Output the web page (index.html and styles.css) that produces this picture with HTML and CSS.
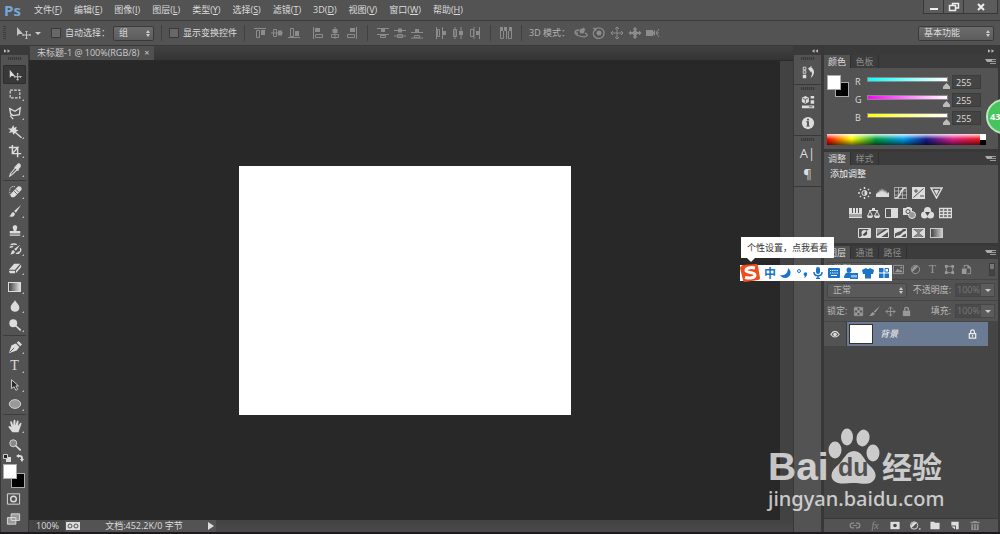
FILE: index.html
```html
<!DOCTYPE html>
<html lang="zh-CN">
<head>
    <meta charset="UTF-8">
    <meta name="viewport" content="width=device-width, initial-scale=1.0">
    <title>Photoshop</title>
    <link rel="stylesheet" href="styles.css">
</head>
<body>
<div class="app">
    <header class="menubar">
        <div class="logo">Ps</div>
        <nav class="menus">
            <button>文件(<u>F</u>)</button>
            <button>编辑(<u>E</u>)</button>
            <button>图像(<u>I</u>)</button>
            <button>图层(<u>L</u>)</button>
            <button>类型(<u>Y</u>)</button>
            <button>选择(<u>S</u>)</button>
            <button>滤镜(<u>T</u>)</button>
            <button>3D(<u>D</u>)</button>
            <button>视图(<u>V</u>)</button>
            <button>窗口(<u>W</u>)</button>
            <button>帮助(<u>H</u>)</button>
        </nav>
        <div class="window-buttons">
            <button aria-label="最小化"><svg viewBox="0 0 12 10"><path d="M2 6h8v2H2z"/></svg></button>
            <button aria-label="还原"><svg viewBox="0 0 12 10" class="line"><path d="M4.500 3V1.500h6v4.500H8M1.500 3.500h6v5h-6z" stroke-width="1.500"/></svg></button>
            <button class="close" aria-label="关闭"><svg viewBox="0 0 12 10" class="line"><path d="M3 2l6 6M9 2L3 8" stroke-width="2"/></svg></button>
        </div>
    </header>

    <div class="options">
        <span class="grip-v"></span>
        <button class="current-tool" aria-label="移动工具">
            <svg class="wide" viewBox="0 0 15 12"><path d="M1 0v9l2-2h4z"/><path class="o" d="M10.500 4v8M6.500 8h8M9.500 5l1-1 1 1M9.500 11l1 1 1-1M7.500 7l-1 1 1 1M13.500 7l1 1-1 1"/></svg>
            <span class="caret"></span>
        </button>
        <label class="check"><input type="checkbox">自动选择：</label>
        <span class="select group-select"><select aria-label="自动选择对象"><option>组</option><option>图层</option></select></span>
        <span class="divider"></span>
        <label class="check"><input type="checkbox">显示变换控件</label>
        <span class="divider"></span>
        <div class="align">
            <button aria-label="顶对齐"><svg viewBox="0 0 12 12"><path d="M0 1h12v1H0zM7 3h4v5H7z"/><path class="o" d="M2.500 3.500h3v7h-3z"/></svg></button>
            <button aria-label="垂直居中对齐"><svg viewBox="0 0 12 12"><path d="M0 5.500h12v1H0zM7 3.500h4v5H7z"/><path class="o" d="M2.500 2.500h3v7h-3z"/></svg></button>
            <button aria-label="底对齐"><svg viewBox="0 0 12 12"><path d="M0 10h12v1H0zM7 4h4v5H7z"/><path class="o" d="M2.500 1.500h3v8h-3z"/></svg></button>
        </div>
        <div class="align">
            <button aria-label="左对齐"><svg viewBox="0 0 12 12"><path d="M1 0h1v12H1zM3 1h5v4H3z"/><path class="o" d="M3.500 7.500h7v3h-7z"/></svg></button>
            <button aria-label="水平居中对齐"><svg viewBox="0 0 12 12"><path d="M5.500 0h1v12h-1zM3.500 2h5v4h-5z"/><path class="o" d="M2.500 7.500h7v3h-7z"/></svg></button>
            <button aria-label="右对齐"><svg viewBox="0 0 12 12"><path d="M10 0h1v12h-1zM4 1h5v4H4z"/><path class="o" d="M1.500 7.500h7v3h-7z"/></svg></button>
        </div>
        <span class="divider"></span>
        <div class="align">
            <button aria-label="按顶分布"><svg viewBox="0 0 12 12"><path d="M0 1h12v1H0zM0 7h12v1H0zM4 2h4v3H4z"/><path class="o" d="M3.500 8.500h5v2h-5z"/></svg></button>
            <button aria-label="垂直居中分布"><svg viewBox="0 0 12 12"><path d="M0 3h12v1H0zM0 8.500h12v1H0zM4 1.500h4v4H4z"/><path class="o" d="M3.500 7.500h5v3h-5z"/></svg></button>
            <button aria-label="按底分布"><svg viewBox="0 0 12 12"><path d="M0 5h12v1H0zM0 10.500h12v1H0zM4 2h4v3H4z"/><path class="o" d="M3.500 8.500h5v2h-5z"/></svg></button>
        </div>
        <div class="align">
            <button aria-label="按左分布"><svg viewBox="0 0 12 12"><path d="M1 0h1v12H1zM7 0h1v12H7zM8 4h3v4H8z"/><path class="o" d="M2.500 2.500h2v7h-2z"/></svg></button>
            <button aria-label="水平居中分布"><svg viewBox="0 0 12 12"><path d="M2.500 0h1v12h-1zM8.500 0h1v12h-1zM7 4h4v4H7z"/><path class="o" d="M1.500 2.500h3v7h-3z"/></svg></button>
            <button aria-label="按右分布"><svg viewBox="0 0 12 12"><path d="M4.500 0h1v12h-1zM10 0h1v12h-1zM7 4h3v4H7z"/><path class="o" d="M1.500 2.500h3v7h-3z"/></svg></button>
        </div>
        <span class="divider"></span>
        <div class="align">
            <button aria-label="自动对齐图层"><svg viewBox="0 0 12 12"><path d="M0 0h3v4H0zM4 0h3v4H4zM9 0h3v4H9z"/><path class="o" d="M.5 4v7.500h3V4M6.500 0v12M8.500 4v7.500h3V4"/></svg></button>
        </div>
        <span class="divider"></span>
        <span class="mode-label">3D 模式：</span>
        <div class="align modes">
            <button aria-label="旋转"><svg viewBox="0 0 14 12"><circle cx="8" cy="4" r="2.500"/><path class="o" d="M5 3C0 3 0 7 4 8.500c4 1.500 8 2 9 0 .5-1-1-2-2-2.500M4 6l-3 .5M9 1l2 2" stroke-width="1.300"/></svg></button>
            <button aria-label="滚动"><svg viewBox="0 0 14 12"><circle cx="7" cy="6" r="2.500"/><path class="o" d="M3 2.500C6-.5 12 1 12 6s-6 7-9 4S1 5 3 2.500M1 1l3 1-1 2" stroke-width="1.300"/></svg></button>
            <button aria-label="拖动"><svg viewBox="0 0 14 12"><path class="o" d="M7 0v12M1 6h12M5 2l2-2 2 2M5 10l2 2 2-2M3 4L1 6l2 2M11 4l2 2-2 2"/></svg></button>
            <button aria-label="滑动"><svg viewBox="0 0 14 12"><circle cx="7" cy="6" r="2.500"/><path d="M7 0l2.500 2.500H8V5h3V3.500L13.500 6 11 8.500V7H8v2.500h1.500L7 12 4.500 9.500H6V7H3v1.500L.5 6 3 3.500V5h3V2.500H4.500z"/></svg></button>
            <button aria-label="缩放"><svg viewBox="0 0 14 12"><path d="M0 3h7v6H0zM7 5l2-2v6L7 7z"/><path class="o" d="M13 2l-3 4 3 4M10 6h3"/></svg></button>
        </div>
        <span class="select workspace"><select aria-label="工作区"><option>基本功能</option></select></span>
    </div>

    <div class="workspace-area">
        <aside class="toolbox">
            <div class="strip"><svg viewBox="0 0 8 6"><path d="M0 1l3 2-3 2zM4 1l3 2-3 2z"/></svg></div>
            <div class="tools">
                <span class="grip"></span>
                <button class="active" aria-label="移动"><svg viewBox="0 0 16 16"><path d="M2 2v9l2-2h4z"/><path class="o" d="M11 6v8M7 10h8M10 7l1-1 1 1M10 13l1 1 1-1M8 9l-1 1 1 1M14 9l1 1-1 1"/></svg></button>
                <button aria-label="选框"><svg viewBox="0 0 16 16"><path class="o" d="M2.500 3.500h11v9h-11z" stroke-dasharray="3 1.500" stroke-width="1.300"/></svg></button>
                <button aria-label="套索"><svg viewBox="0 0 16 16"><path class="o" d="M2 3l6 3 6-4-1 8-7 1-3-2zM6 11c-2-2-4 0-2 2l2 2" stroke-width="1.500"/></svg></button>
                <button aria-label="魔棒"><svg viewBox="0 0 16 16"><path d="M6 0l1 3 3-1-1 3 3 1-3 2 7 6-1 1-7-6-2 2-1-3-4 1 2-3-3-2h4z"/></svg></button>
                <button aria-label="裁剪"><svg viewBox="0 0 16 16"><path class="o" d="M5 1v10h10M1 4h10v11M5 11l7-8" stroke-width="1.700"/></svg></button>
                <button aria-label="吸管"><svg viewBox="0 0 16 16"><path d="M10 2c3-4 6 0 4 3l-2 2 1 1-2 1-4-4 1-1z"/><path class="o" d="M8 6l-5 6-1 3 3-2 5-5" stroke-width="1.300"/></svg></button>
                <hr>
                <button aria-label="修复画笔"><svg viewBox="0 0 16 16"><path d="M4 9l7-7c3-2 6 2 4 4l-7 7c-3 3-7-1-4-4z"/><path class="o" d="M8 2c-4-1-6 1-6 5s1 6 3 7" stroke-dasharray="1.500 1"/><path class="cut" d="M7 7l3 3M9 5l3 3"/></svg></button>
                <button aria-label="画笔"><svg viewBox="0 0 16 16"><path d="M15 1l-6 9-2-2zM6 9l2 2c-1 4-4 4-7 3 3-1 2-4 5-5z"/></svg></button>
                <button aria-label="仿制图章"><svg viewBox="0 0 16 16"><path d="M6 7c-3-6 7-6 4 0l-.5 2H14v3H2V9h4.500zM2 13h12v1.500H2z"/></svg></button>
                <button aria-label="历史记录画笔"><svg viewBox="0 0 16 16"><path d="M14 3l-5 7-2-2zM6 9l2 2c-1 3-4 3-6 3 3-1 1-4 4-5z"/><path class="o" d="M2 6l4-1M3 3c3-1 5-1 7 0M11 12c4 0 4-3 3-5M9 13h4" stroke-width="1.500"/></svg></button>
                <button aria-label="橡皮擦"><svg viewBox="0 0 16 16"><path d="M7 3h7l-6 7H1zM1 11h7v3H2zM9 11l6-7v3l-6 7z"/></svg></button>
                <button aria-label="渐变"><span class="gradient-icon"></span></button>
                <button aria-label="模糊"><svg viewBox="0 0 16 16"><path d="M8 1c1 3 5 5 5 9 0 6-10 6-10 0 0-4 4-6 5-9z"/></svg></button>
                <button aria-label="减淡"><svg viewBox="0 0 16 16"><circle cx="6" cy="6" r="4.500"/><path d="M8 9l1-1 6 5-1 2z"/></svg></button>
                <hr>
                <button aria-label="钢笔"><svg viewBox="0 0 16 16"><path d="M1 15l3-9 5-2 4 4-3 4z"/><path d="M10 3l2-2 4 4-2 2z"/><path class="cut" d="M2 14l5-5"/></svg></button>
                <button aria-label="文字"><span class="type-icon">T</span></button>
                <button aria-label="路径选择"><svg viewBox="0 0 16 16"><path class="arrow" d="M4 2v10l3-2 2 4 2-1-2-4h3z"/></svg></button>
                <button aria-label="椭圆"><svg viewBox="0 0 16 16"><ellipse class="shape" cx="8" cy="8" rx="6.500" ry="5"/></svg></button>
                <hr>
                <button aria-label="抓手"><svg viewBox="0 0 16 16"><path d="M5 15L1 10C-.5 7.500 2 7.500 3 8.500l1 1L2.500 4c0-2 2-1.500 2.300 0L6 7.500 6.300 2c.2-1.500 2-1.500 2.200 0v5.500L10 2.500c.5-1.500 2.300-1 2 .5L11.500 8l2-3c1-1.200 2.400-.5 1.700 1L12 15z"/></svg></button>
                <button class="no-more" aria-label="缩放工具"><svg viewBox="0 0 16 16"><circle class="lens" cx="6" cy="6" r="4"/><path d="M8 9l1-1 6 5-1 2z"/></svg></button>
            </div>
            <div class="swatch-tools">
                <button aria-label="默认颜色"><svg viewBox="0 0 8 8"><path d="M3 3h5v5H3z"/><path class="mini" d="M.5.5h4v4h-4z"/></svg></button>
                <button aria-label="切换颜色"><svg viewBox="0 0 8 8"><path d="M0 2l3-2v1c3 0 4 1 4 4h1L6 8 4 5h1c0-2 0-2-2-2v1z"/></svg></button>
            </div>
            <div class="swatches"><span class="bg"></span><span class="fg"></span></div>
            <div class="screen-tools">
                <button aria-label="快速蒙版"><svg viewBox="0 0 16 12"><path class="o" d="M1.500.500h13v11h-13z"/><circle class="o" cx="8" cy="6" r="3" stroke-width="1.500"/></svg></button>
                <button aria-label="屏幕模式"><svg viewBox="0 0 16 12"><path class="shape" d="M1.500 4.500h9v7h-9zM5.500.500h9v7h-9z"/></svg></button>
            </div>
        </aside>

        <main class="document">
            <div class="doc-tabs">
                <div class="doc-tab">未标题-1 @ 100%(RGB/8) <button aria-label="关闭文档">×</button></div>
            </div>
            <div class="doc-view">
                <div class="canvas-area"><div class="canvas"></div></div>
                <div class="scrollbar"></div>
            </div>
            <footer class="status">
                <span class="zoom">100%</span>
                <div class="status-info">
                    <svg viewBox="0 0 14 8"><path d="M0 0h14v8H0z"/><circle class="cut" cx="4" cy="4" r="2"/><circle class="cut" cx="10" cy="4" r="2"/></svg>
                    <span>文档:452.2K/0 字节</span>
                    <button aria-label="状态选项"><svg viewBox="0 0 6 8"><path d="M0 0l6 4-6 4z"/></svg></button>
                </div>
            </footer>
        </main>

        <aside class="dock">
            <div class="strip"><svg viewBox="0 0 8 6"><path d="M4 1L1 3l3 2zM8 1L5 3l3 2z"/></svg></div>
            <div class="dock-group">
                <span class="grip"></span>
                <button aria-label="历史记录"><svg viewBox="0 0 16 16"><path class="o" d="M2.500 2.500h3v3h-3zM2.500 6.500h3v3h-3z"/><path d="M2 11h4v4H2zM8 4l4-3v2c4 2 4 8-1 12 2-5 2-7 1-8v2z"/></svg></button>
            </div>
            <div class="dock-group">
                <span class="grip"></span>
                <button aria-label="属性"><svg viewBox="0 0 16 16"><path d="M1 3l4-2 4 2v5L5 10 1 8zM11 1h4v3h-4zM11 6h4v4h-4zM1 12h14v3H1z"/><path class="cut" d="M2 4l3 1 3-1M5 5v4M9 13.500h4"/></svg></button>
                <button aria-label="信息"><svg viewBox="0 0 16 16"><circle cx="8" cy="8" r="7"/><path class="ink" d="M7 3h2v2H7zM6 6h3v5h1v1H6v-1h1V7H6z"/></svg></button>
            </div>
            <div class="dock-group">
                <span class="grip"></span>
                <button class="glyph" aria-label="字符">A|</button>
                <button class="glyph" aria-label="段落">¶</button>
            </div>
            <div class="dock-rest"></div>
        </aside>

        <aside class="panels">
            <div class="strip right"><svg viewBox="0 0 8 6"><path d="M0 1l3 2-3 2zM4 1l3 2-3 2z"/></svg></div>

            <section class="panel">
                <div class="tabs"><button class="on">颜色</button><button>色板</button><span class="panel-menu"></span></div>
                <div class="color-body">
                    <div class="swatches small"><span class="bg"></span><span class="fg"></span></div>
                    <div class="channels">
                        <div class="channel"><label for="r">R</label><input class="range red" id="r" type="range" min="0" max="255" value="255"><input type="text" value="255" aria-label="R 值"></div>
                        <div class="channel"><label for="g">G</label><input class="range green" id="g" type="range" min="0" max="255" value="255"><input type="text" value="255" aria-label="G 值"></div>
                        <div class="channel"><label for="b">B</label><input class="range blue" id="b" type="range" min="0" max="255" value="255"><input type="text" value="255" aria-label="B 值"></div>
                    </div>
                </div>
                <div class="ramp"><span class="spectrum"></span><span class="ends"></span></div>
            </section>

            <section class="panel">
                <div class="tabs"><button class="on">调整</button><button>样式</button><span class="panel-menu"></span></div>
                <div class="adjust-body">
                    <h2>添加调整</h2>
                    <div class="adjust-row">
                        <button aria-label="亮度/对比度"><svg viewBox="0 0 13 12"><path class="o" d="M6.500 0v2M6.500 10v2M0 6h2M11 6h2M2 2l1 1M10 9l1 1M11 2l-1 1M3 9l-1 1" stroke-width="1.500"/><circle class="o" cx="6.500" cy="6" r="2.500"/><path d="M6.500 3.500a2.500 2.500 0 0 1 0 5z"/></svg></button>
                        <button aria-label="色阶"><svg viewBox="0 0 13 12"><path d="M0 10V6l1 1 1-3 1 2 1-4 1 3 1-4 1 4 1-3 1 4 1-3 1 4 1-2 1 1v4z"/></svg></button>
                        <button aria-label="曲线"><svg viewBox="0 0 13 12"><path class="o" d="M.5.500h12v11H.5zM4.500 0v12M8.500 0v12M0 4h13M0 8h13" opacity=".6"/><path class="o" d="M1 11c7 0 4-10 11-10" stroke-width="1.500"/></svg></button>
                        <button aria-label="曝光度"><svg viewBox="0 0 13 12"><path d="M0 0h13v12H0z"/><path class="cut" d="M1.500 10.500l10-9M2 4h4M4 2v4M8 9h4"/></svg></button>
                        <button aria-label="自然饱和度"><svg viewBox="0 0 13 12"><path class="o" d="M1 1h11L6.500 11z" stroke-width="1.500"/><path d="M4 3h5L6.500 8z"/></svg></button>
                    </div>
                    <div class="adjust-row six">
                        <button aria-label="色相/饱和度"><svg viewBox="0 0 13 12"><path d="M0 1h13v10H0z"/><path class="cut" d="M3.500 1v5M6.500 1v5M9.500 1v5"/><path class="ink" d="M0 7h13v3H0z" opacity=".4"/></svg></button>
                        <button aria-label="色彩平衡"><svg viewBox="0 0 13 12"><path class="o" d="M6.500 1v3M2 3.500h9M3 4L.5 9h5zM10 4L7.500 9h5z"/><path d="M0 9h6L5 11H1zM7 9h6l-1 2H8zM5 1h3v2H5z"/></svg></button>
                        <button aria-label="黑白"><svg viewBox="0 0 13 12"><path class="o" d="M.5 1.500h12v9H.5z"/><path d="M6 1h7v10H6z"/></svg></button>
                        <button aria-label="照片滤镜"><svg viewBox="0 0 13 12"><path d="M0 1h3l1-1h3l1 1h1v7H0z"/><circle class="shape" cx="9" cy="8" r="3.500"/><circle class="cut" cx="5" cy="4.500" r="2"/></svg></button>
                        <button aria-label="通道混合器"><svg viewBox="0 0 13 12"><circle cx="6.500" cy="3.500" r="3.500"/><circle cx="3.500" cy="8" r="3.500"/><circle cx="9.500" cy="8" r="3.500"/><path class="ink" d="M4 5h5L6.500 9z"/></svg></button>
                        <button aria-label="颜色查找"><svg viewBox="0 0 13 12"><path class="o" d="M.5 1.500h12v9H.5zM4.500 1v10M8.500 1v10M0 4.500h13M0 7.500h13" stroke-width="1.300"/></svg></button>
                    </div>
                    <div class="adjust-row">
                        <button aria-label="反相"><svg viewBox="0 0 13 12"><path class="o" d="M.5 1.500h12v9H.5z"/><path d="M1 11L12 1v10z"/><circle cx="6.500" cy="6" r="3"/><path class="ink" d="M4.500 8l4-4c2 3-1 6-4 4z"/></svg></button>
                        <button aria-label="色调分离"><svg viewBox="0 0 13 12"><path class="o" d="M.5 1.500h12v9H.5z"/><path d="M0 1h10L0 8z" opacity=".5"/><path d="M1 9L12 2v3L4 11H1z"/></svg></button>
                        <button aria-label="阈值"><svg viewBox="0 0 13 12"><path class="o" d="M.5 1.500h12v9H.5z"/><path d="M0 1h10L7 4 4 5 0 7zM2 9l4-1 3-3 4-2v3L9 8l-3 3H2z"/></svg></button>
                        <button aria-label="可选颜色"><svg viewBox="0 0 13 12"><path class="o" d="M.5 1.500h12v9H.5z"/><path d="M1 1l5.500 5L12 1zM1 11l5.500-5L12 11z" opacity=".4"/><path d="M0 1l6 5-6 5zM13 1L7 6l6 5z"/></svg></button>
                        <button aria-label="渐变映射"><span class="map-icon"></span></button>
                    </div>
                </div>
            </section>

            <section class="panel layers">
                <div class="tabs"><button class="on">图层</button><button>通道</button><button>路径</button><span class="panel-menu"></span></div>
                <div class="layer-row">
                    <span class="select filter-select"><select aria-label="图层过滤"><option>类型</option></select></span>
                    <div class="filters">
                        <button aria-label="像素"><svg viewBox="0 0 12 12"><path class="o" d="M.5 1.500h11v9H.5z"/><path d="M2 9l3-4 2 2 1-1 3 3zM8 3h2v2H8z"/></svg></button>
                        <button aria-label="调整图层"><svg viewBox="0 0 12 12"><circle class="o" cx="6" cy="6" r="4.500"/><path d="M2.500 9A5 5 0 0 1 9 2.500z"/></svg></button>
                        <button class="glyph" aria-label="文字图层">T</button>
                        <button aria-label="形状"><svg viewBox="0 0 12 12"><path class="o" d="M2.500 2.500h7v7h-7z"/><path d="M1 1h3v3H1zM8 1h3v3H8zM1 8h3v3H1zM8 8h3v3H8z"/></svg></button>
                        <button aria-label="智能对象"><svg viewBox="0 0 12 12"><path class="o" d="M3.500 4V1.500H8l2.500 2.500v6.500H7"/><path d="M1 5h5v6H1zM7 1v4h4z"/></svg></button>
                    </div>
                    <span class="toggle"></span>
                </div>
                <div class="layer-row">
                    <span class="select blend-select"><select aria-label="混合模式"><option>正常</option></select></span>
                    <label class="push" for="opacity">不透明度:</label>
                    <span class="percent"><input id="opacity" type="text" value="100%"><button aria-label="调整不透明度"><span class="caret"></span></button></span>
                </div>
                <div class="layer-row">
                    <span>锁定:</span>
                    <div class="locks">
                        <button aria-label="锁定透明像素"><svg viewBox="0 0 12 12"><path class="o" d="M1.500 1.500h9v9h-9z"/><path d="M2 2h3v3H2zM7 2h3v3H7zM4.500 4.500h3v3h-3zM2 7h3v3H2zM7 7h3v3H7z"/></svg></button>
                        <button aria-label="锁定图像像素"><svg viewBox="0 0 12 12"><path d="M12 0L7 7 5 6zM4.500 6.500l2 2C5 11 3 11 0 11c2-1 2-4 4.500-4.500z"/></svg></button>
                        <button aria-label="锁定位置"><svg viewBox="0 0 12 12"><path class="o" d="M6 1v10M1 6h10M4 3l2-2 2 2M4 9l2 2 2-2M3 4L1 6l2 2M9 4l2 2-2 2"/></svg></button>
                        <button aria-label="全部锁定"><svg viewBox="0 0 12 12"><path d="M2 5h8v6H2z"/><path class="o" d="M4 5V3c0-2 4-2 4 0v2" stroke-width="1.500"/></svg></button>
                    </div>
                    <label class="push" for="fill">填充:</label>
                    <span class="percent"><input id="fill" type="text" value="100%"><button aria-label="调整填充"><span class="caret"></span></button></span>
                </div>
                <div class="layer-list">
                    <div class="layer">
                        <button class="eye" aria-label="可见性"><svg viewBox="0 0 12 10"><path class="o" d="M1 5c3-5 7-5 10 0-3 4-7 4-10 0z" stroke-width="1.300"/><circle cx="6" cy="5" r="2.200"/></svg></button>
                        <div class="layer-main">
                            <span class="thumb"></span>
                            <span class="layer-name">背景</span>
                            <svg viewBox="0 0 12 12"><path class="o" d="M2.500 5.500h7v5h-7zM4 5V3c0-2 4-2 4 0v2M6 7v2" stroke-width="1.300"/></svg>
                        </div>
                    </div>
                </div>
                <div class="layer-footer">
                    <button class="dim" aria-label="链接图层"><svg viewBox="0 0 12 12"><path class="o" d="M5 3.500H3c-3 0-3 5 0 5h2M7 3.500h2c3 0 3 5 0 5H7M4 6h4" stroke-width="1.300"/></svg></button>
                    <button class="dim fx">fx</button>
                    <button aria-label="添加蒙版"><svg viewBox="0 0 12 12"><path d="M1 2h10v8H1z"/><circle class="ink" cx="6" cy="6" r="2"/></svg></button>
                    <button aria-label="新建调整图层"><svg viewBox="0 0 12 12"><circle class="o" cx="5" cy="6" r="4"/><path d="M2 9a4.500 4.500 0 0 1 6-6zM10.500 9H12v1.500h-1.500z"/></svg></button>
                    <button aria-label="新建组"><svg viewBox="0 0 12 12"><path d="M1 2h4l1 1h5v7H1z"/></svg></button>
                    <button aria-label="新建图层"><svg viewBox="0 0 12 12"><path d="M2 2h8v8H7V6H2z"/><path d="M2 7h4v3z"/></svg></button>
                    <button class="dim" aria-label="删除图层"><svg viewBox="0 0 12 12"><path d="M1 2h3V1h4v1h3v1.500H1zM2 4.500h8V11H2z"/><path class="cut" d="M4.500 5v5M7.500 5v5"/></svg></button>
                </div>
            </section>
        </aside>
    </div>

    <div class="badge">43</div>

    <div class="ime-tip">个性设置，点我看看</div>
    <div class="ime-bar">
        <svg class="ime-logo" viewBox="0 0 20 20"><path class="ime-tile" d="M3 2l13-1q2 0 2 2l2 12q0 2-2 2L5 19q-2 0-2-2L0 5q0-2 3-3z"/><path class="ime-s" d="M15 5C10 4 6 5 6 7.500S15 9 15 12s-5 3.500-10 2.500"/></svg>
        <span class="ime-zh">中</span>
        <svg viewBox="0 0 12 12"><path d="M8 1c5 4 2 10-3 10-2 0-4-1-5-3 5 1 8-2 8-7z"/></svg>
        <svg viewBox="0 0 12 12"><circle class="o" cx="3" cy="4" r="1.500"/><path d="M8 6c2-2 4 0 3 2-1 2-2 3-3 3l1-2c-1 0-2-2-1-3z"/></svg>
        <svg viewBox="0 0 12 12"><rect x="4" y="0" width="4" height="7" rx="2"/><path class="o" d="M2 5c0 5 8 5 8 0M6 8v4M4 11.500h4" stroke-width="1.500"/></svg>
        <svg viewBox="0 0 12 12"><rect y="1" width="12" height="10" rx="1"/><path class="keys" d="M2 3.500h8M2 6h8" stroke-dasharray="1.200 1"/><path class="keys" d="M3 8.500h6"/></svg>
        <svg class="person" viewBox="0 0 14 12"><circle cx="5" cy="3" r="2.500"/><path d="M0 11c0-7 8-7 8-3v3z"/><path d="M6 6h8v6H6z"/><path class="keys" d="M8 8v2.500M10 8v2.500M12 8v2.500"/></svg>
        <svg viewBox="0 0 12 12"><path d="M4 1q2 2 4 0l4 2-1 4H9v4.500H3V7H1L0 3z"/></svg>
        <svg viewBox="0 0 12 12"><path d="M1 1h4.500v4.500H1zM1 6.500h4.500V11H1zM6.500 6.500H11V11H6.500z"/><path class="o" d="M7 1.500h3.500V5H7z"/></svg>
    </div>

    <div class="watermark">
        <div class="brand">
            <span class="bai">Bai</span>
            <span class="paw">
                <svg viewBox="0 0 52 56"><ellipse cx="7" cy="22" rx="6.500" ry="8.500"/><ellipse cx="19" cy="9" rx="6" ry="8.500"/><ellipse cx="35" cy="10" rx="6.500" ry="8.500" transform="rotate(12 35 10)"/><ellipse cx="45" cy="25" rx="6.500" ry="8.500"/><path d="M26 23c8 0 10 9 15 14 7 6 8 11 5 15-4 6-12 3-20 3s-15 2-20-2C1 48 4 42 10 37c6-5 8-14 16-14z"/></svg>
                <span class="du">du</span>
            </span>
            <span class="jingyan">经验</span>
        </div>
        <div class="url">jingyan.baidu.com</div>
    </div>
</div>
</body>
</html>
```

FILE: styles.css
```css
* {
    box-sizing: border-box;
}
body {
    margin: 0;
    background: #282828;
    color: #dcdcdc;
    font: 9px/12px "Open Sans", "Noto Sans CJK SC", sans-serif;
}
button, input, select {
    margin: 0;
    padding: 0;
    border: 0;
    background: none;
    color: inherit;
    font: inherit;
}
button {
    display: flex;
    align-items: center;
    justify-content: center;
    flex: none;
    white-space: nowrap;
}
svg {
    display: block;
    flex: none;
    width: 12px;
    height: 12px;
    fill: currentColor;
}
.line, .o {
    fill: none;
    stroke: currentColor;
}
.cut {
    fill: none;
    stroke: #535353;
}
.ink {
    fill: #484848;
}
.shape {
    fill: #999;
    stroke: currentColor;
}
.app {
    position: relative;
    display: flex;
    flex-direction: column;
    height: 100vh;
    overflow: hidden;
    border-bottom: 2px solid #1d1a1e;
}

/* menu bar */
.menubar {
    display: flex;
    height: 21px;
    background: #535353;
    border-bottom: 1px solid #3c3c3c;
}
.logo {
    width: 34px;
    padding-left: 4px;
    color: #77a7d8;
    font: bold 15px/20px "Open Sans", sans-serif;
}
.menus {
    display: flex;
    gap: 12px;
    flex: 1;
    align-items: center;
}
.window-buttons {
    display: flex;
    height: 14px;
    margin-right: 2px;
    border: 1px solid #383838;
    border-top: 0;
    background: #5c5c5c;
}
.window-buttons button {
    width: 20px;
    color: #eee;
    border-right: 1px solid #383838;
}
.window-buttons .close {
    width: 33px;
    border: 0;
}
.window-buttons svg {
    height: 10px;
}

/* options bar */
.options {
    display: flex;
    align-items: center;
    height: 25px;
    padding-right: 6px;
    background: #535353;
    border-bottom: 1px solid #393939;
}
.grip-v {
    width: 3px;
    height: 14px;
    margin-left: 3px;
    background: repeating-linear-gradient(#3c3c3c 0 1px, #535353 1px 2px);
}
.current-tool {
    gap: 4px;
    margin: 0 10px;
    color: #c4c4c4;
}
.wide {
    width: 15px;
}
.caret {
    border: 3px solid transparent;
    border-top-color: #ccc;
    border-bottom: 0;
}
.check {
    display: flex;
    align-items: center;
    gap: 4px;
    white-space: nowrap;
}
.check input {
    appearance: none;
    width: 10px;
    height: 10px;
    border: 1px solid #393939;
    background: #686868;
}
.select {
    position: relative;
    display: flex;
    height: 15px;
    border: 1px solid #3a3a3a;
    border-radius: 2px;
    background: linear-gradient(#6c6c6c, #5c5c5c);
}
.select select {
    appearance: none;
    width: 100%;
    padding-left: 5px;
}
.select::before, .select::after {
    content: "";
    position: absolute;
    right: 3px;
    border: 2px solid transparent;
}
.select::before {
    top: 3px;
    border-top: 0;
    border-bottom: 3px solid #ccc;
}
.select::after {
    bottom: 3px;
    border-bottom: 0;
    border-top: 3px solid #ccc;
}
.group-select {
    width: 41px;
    margin-left: 3px;
}
.divider {
    width: 1px;
    height: 16px;
    margin: 0 7px;
    background: #414141;
}
.align {
    display: flex;
    gap: 5px;
    margin: 0 2px;
    color: #8c8c8c;
}
.align + .align {
    margin-left: 10px;
}
.align svg {
    width: 12px;
}
.mode-label {
    color: #b4b4b4;
}
.modes {
    gap: 4px;
    margin-left: 4px;
}
.modes svg {
    width: 14px;
}
.workspace {
    width: 76px;
    margin-left: auto;
}

/* columns under the bars */
.workspace-area {
    display: flex;
    flex: 1;
    min-height: 0;
    background: #383838;
}
.strip {
    display: flex;
    align-items: center;
    height: 9px;
    padding: 0 3px;
    color: #bbb;
    background: #3a3a3a;
}
.strip svg {
    width: 7px;
    height: 6px;
}
.right, .dock .strip {
    justify-content: flex-end;
}
.grip {
    display: block;
    width: 14px;
    height: 3px;
    margin: 0 auto 1px;
    background: repeating-linear-gradient(90deg, #3a3a3a 0 1px, #4c4c4c 1px 2px);
}
.toolbox {
    flex: none;
    width: 29px;
    border: solid #383838;
    border-width: 0 1px;
    background: #535353;
}
.tools {
    padding: 2px 2px 0;
}
.tools .grip {
    margin-bottom: 5px;
}
.tools button {
    position: relative;
    width: 23px;
    height: 19px;
    border-radius: 2px;
}
.tools button::after {
    content: "";
    position: absolute;
    right: 2px;
    bottom: 2px;
    border: 1px solid #bbb;
    border-top-color: transparent;
    border-left-color: transparent;
}
.tools .active {
    background: #383838;
    box-shadow: inset 0 0 0 1px #2e2e2e;
}
.tools .active::after, .tools .no-more::after {
    display: none;
}
.tools svg {
    width: 14px;
    height: 14px;
}
.tools hr {
    height: 1px;
    margin: 1px 0;
    border: 0;
    background: #3c3c3c;
}
.gradient-icon {
    width: 13px;
    height: 10px;
    border: 1px solid #ddd;
    background: linear-gradient(90deg, #444, #ddd);
}
.type-icon {
    font: 14px/16px "Liberation Serif", serif;
}
.arrow {
    fill: #2b2b2b;
    stroke: currentColor;
}
.lens {
    fill: #888;
    stroke: currentColor;
}
.swatch-tools {
    display: flex;
    justify-content: space-between;
    padding: 0 4px 0 2px;
}
.swatch-tools svg {
    width: 8px;
    height: 8px;
}
.mini {
    fill: #222;
    stroke: #ccc;
}
.swatches {
    position: relative;
    flex: none;
    width: 22px;
    height: 24px;
    margin: 2px 0 5px 2px;
}
.fg, .bg {
    position: absolute;
    width: 14px;
    height: 15px;
    border: 1px solid #aaa;
}
.fg {
    left: 0;
    top: 0;
    background: #fff;
}
.bg {
    right: 0;
    bottom: 0;
    background: #000;
}
.screen-tools button {
    height: 20px;
    margin-left: 5px;
    align-items: flex-start;
}
.screen-tools svg {
    width: 15px;
    height: 12px;
}

/* document window */
.document {
    display: flex;
    flex-direction: column;
    flex: 1;
    min-width: 0;
}
.doc-tabs {
    display: flex;
    height: 15px;
    background: linear-gradient(#424242, #343434);
    border-bottom: 1px solid #2a2a2a;
}
.doc-tab {
    display: flex;
    align-items: center;
    gap: 5px;
    margin-left: 1px;
    padding: 0 4px 0 7px;
    background: #505050;
    color: #ccc;
}
.doc-view {
    display: flex;
    flex: 1;
    min-height: 0;
}
.canvas-area {
    display: flex;
    align-items: center;
    justify-content: center;
    flex: 1;
    background: #282828;
}
.canvas {
    width: 332px;
    height: 249px;
    background: #fff;
}
.scrollbar {
    width: 13px;
    background: #424242;
}
.status {
    display: flex;
    height: 12px;
    background: linear-gradient(#424242, #4a4a4a);
}
.zoom {
    width: 36px;
    padding-left: 7px;
    background: #444;
}
.status-info {
    display: flex;
    align-items: center;
    justify-content: space-between;
    width: 151px;
    padding: 0 2px 0 1px;
    background: #535353;
}
.status-info svg {
    width: 14px;
    height: 8px;
}
.status-info button svg {
    width: 6px;
}

/* icon dock */
.dock {
    display: flex;
    flex-direction: column;
    flex: none;
    width: 29px;
    padding: 0 1px;
}
.dock-group {
    padding: 2px 0;
    background: #535353;
    border-bottom: 1px solid #383838;
}
.dock-group button {
    width: 100%;
    height: 21px;
}
.dock-group svg {
    width: 14px;
    height: 14px;
}
.dock-group .glyph {
    font-size: 13px;
}
.dock-rest {
    flex: 1;
    background: #535353;
}

/* panels */
.panels {
    display: flex;
    flex-direction: column;
    flex: none;
    width: 178px;
    padding: 0 2px;
}
.panel {
    margin-bottom: 3px;
    background: #535353;
}
.tabs {
    display: flex;
    height: 13px;
    background: #3c3c3c;
    color: #8c8c8c;
}
.tabs button {
    width: 28px;
    border-right: 1px solid #303030;
}
.tabs .on {
    width: 27px;
    background: #535353;
    color: #dcdcdc;
}
.panel-menu {
    width: 6px;
    height: 6px;
    margin: 4px 2px 0 auto;
    background: repeating-linear-gradient(#999 0 1px, #3c3c3c 1px 2px);
}
.panel-menu::before {
    content: "";
    display: block;
    width: 4px;
    margin-left: -5px;
    border: 2px solid transparent;
    border-top: 3px solid #aaa;
    border-bottom: 0;
}
.color-body {
    display: flex;
    gap: 6px;
    padding: 7px 17px 0 3px;
}
.small {
    height: 22px;
    margin: 0;
}
.channels {
    display: grid;
    gap: 4px;
    flex: 1;
}
.channel {
    display: grid;
    grid-template-columns: 8px 1fr 29px;
    gap: 4px;
    align-items: center;
}
.channel input[type=text] {
    width: 100%;
    height: 14px;
    padding-left: 3px;
    border: 1px solid #3c3c3c;
    background: #444;
}
.range {
    appearance: none;
    width: 100%;
    height: 13px;
}
.range::-webkit-slider-runnable-track {
    height: 5px;
    margin-bottom: 5px;
    border: 1px solid #888;
}
.range::-webkit-slider-thumb {
    appearance: none;
    width: 7px;
    height: 6px;
    margin-top: 5px;
    transform: translateX(3px);
    background: #bbb;
    clip-path: polygon(50% 0, 100% 60%, 100% 100%, 0 100%, 0 60%);
}
.red::-webkit-slider-runnable-track {
    background: linear-gradient(90deg, #0ff, #fff);
}
.green::-webkit-slider-runnable-track {
    background: linear-gradient(90deg, #f0f, #fff);
}
.blue::-webkit-slider-runnable-track {
    background: linear-gradient(90deg, #ff0, #fff);
}
.ramp {
    display: flex;
    height: 24px;
    padding: 9px 12px 4px 3px;
}
.spectrum {
    flex: 1;
    background:
        linear-gradient(rgba(255, 255, 255, .85), transparent 45%, rgba(0, 0, 0, .6)),
        linear-gradient(90deg, #f00, #ff0 16%, #00a040 32%, #00a0f0 50%, #1a1a90 65%, #e0208a 82%, #f01818);
}
.ends {
    width: 6px;
    background: linear-gradient(#fff 50%, #000 50%);
}
.adjust-body {
    padding-top: 3px;
}
.adjust-body h2 {
    margin: 0 0 3px 6px;
    font: inherit;
    color: #eee;
}
.adjust-row {
    display: flex;
    justify-content: center;
    gap: 5px;
    height: 20px;
    padding-right: 22px;
}
.adjust-row.six {
    padding-right: 21px;
}
.adjust-row svg {
    width: 13px;
}
.map-icon {
    width: 13px;
    height: 10px;
    border: 1px solid #ccc;
    background: linear-gradient(90deg, #444, #ccc);
}

/* layers */
.layers {
    display: flex;
    flex-direction: column;
    flex: 1;
    min-height: 0;
    margin: 0;
    color: #b8b8b8;
}
.layer-row {
    display: flex;
    align-items: center;
    height: 21px;
    padding: 0 3px;
    border-bottom: 1px solid #454545;
}
.filter-select {
    width: 58px;
}
.blend-select {
    width: 80px;
}
.layers .select {
    background: #5a5a5a;
    border-color: #464646;
}
.filters, .locks {
    display: flex;
    gap: 6px;
    margin-left: 8px;
    color: #999;
}
.locks {
    gap: 5px;
    margin-left: 6px;
}
.filters svg, .locks svg {
    width: 11px;
    height: 11px;
}
.filters .glyph {
    width: 11px;
    font: 12px/12px "Liberation Serif", serif;
}
.toggle {
    width: 6px;
    height: 13px;
    margin-left: auto;
    border: 1px solid #3c3c3c;
    background: linear-gradient(#777 50%, #444 50%);
}
.push {
    margin: 0 4px 0 auto;
}
.percent {
    display: flex;
    height: 14px;
    border: 1px solid #464646;
    color: #777;
}
.percent input {
    width: 25px;
    background: #4a4a4a;
    text-align: center;
}
.percent button {
    width: 13px;
    background: #5c5c5c;
}
.layer-list {
    flex: 1;
    padding-right: 10px;
    background: #454545;
}
.layer {
    display: flex;
    height: 24px;
}
.eye {
    width: 22px;
    background: #535353;
    color: #ddd;
}
.eye svg {
    width: 10px;
    height: 9px;
}
.layer-main {
    display: flex;
    align-items: center;
    flex: 1;
    padding: 0 10px 0 2px;
    border-left: 1px solid #3a3a3a;
    background: #6b7b93;
    color: #eee;
}
.thumb {
    width: 24px;
    height: 20px;
    border: 1px solid #333;
    background: #fff;
}
.layer-name {
    flex: 1;
    padding-left: 7px;
    font-style: italic;
}
.layer-main svg {
    width: 11px;
}
.layer-footer {
    display: flex;
    justify-content: center;
    gap: 8px;
    height: 14px;
    padding-left: 8px;
    border-top: 1px solid #383838;
    color: #ddd;
}
.layer-footer .dim {
    color: #909090;
}
.layer-footer svg {
    height: 11px;
}
.layer-footer .fx {
    width: 12px;
    font: italic 10px/12px "Liberation Serif", serif;
}

/* floating things over the window */
.badge {
    position: absolute;
    right: -21px;
    top: 99px;
    width: 35px;
    height: 35px;
    padding-left: 2px;
    border: 2px solid #b9e6c0;
    border-radius: 50%;
    background: #45c55c;
    color: #fff;
    font: bold 9px/31px "Open Sans", sans-serif;
}
.ime-tip {
    position: absolute;
    right: 166px;
    top: 237px;
    width: 93px;
    background: #fff;
    color: #333;
    line-height: 21px;
    text-align: center;
}
.ime-tip::after {
    content: "";
    position: absolute;
    left: 6px;
    top: 100%;
    border: 4px solid transparent;
    border-top-color: #fff;
    border-bottom: 0;
}
.ime-bar {
    position: absolute;
    right: 108px;
    top: 265px;
    display: flex;
    align-items: center;
    gap: 4px;
    height: 16px;
    padding-right: 2px;
    background: #fff;
    color: #1c74c8;
}
.ime-logo {
    width: 20px;
    height: 20px;
}
.ime-tile {
    fill: #ee4d1d;
}
.ime-s {
    fill: none;
    stroke: #fff;
    stroke-width: 3;
}
.ime-zh {
    width: 12px;
    font: bold 12px/16px "Noto Sans CJK SC", sans-serif;
}
.keys {
    fill: none;
    stroke: #fff;
}
.person {
    width: 14px;
}
.watermark {
    position: absolute;
    right: 54px;
    bottom: 18px;
    width: 178px;
    color: #fff;
    opacity: .72;
}
.brand {
    display: flex;
    align-items: flex-end;
    height: 56px;
}
.bai {
    width: 60px;
    height: 38px;
    font: bold 39px/42px "Liberation Sans", sans-serif;
}
.paw {
    position: relative;
}
.paw svg {
    width: 52px;
    height: 56px;
}
.du {
    position: absolute;
    left: 10px;
    bottom: 4px;
    color: #555;
    font: bold 25px/25px "Liberation Sans", sans-serif;
}
.jingyan {
    margin: 0 0 3px 2px;
    font: bold 30px/32px "Noto Sans CJK SC", sans-serif;
}
.url {
    font: 500 20px/30px "Noto Sans", sans-serif;
}
```
